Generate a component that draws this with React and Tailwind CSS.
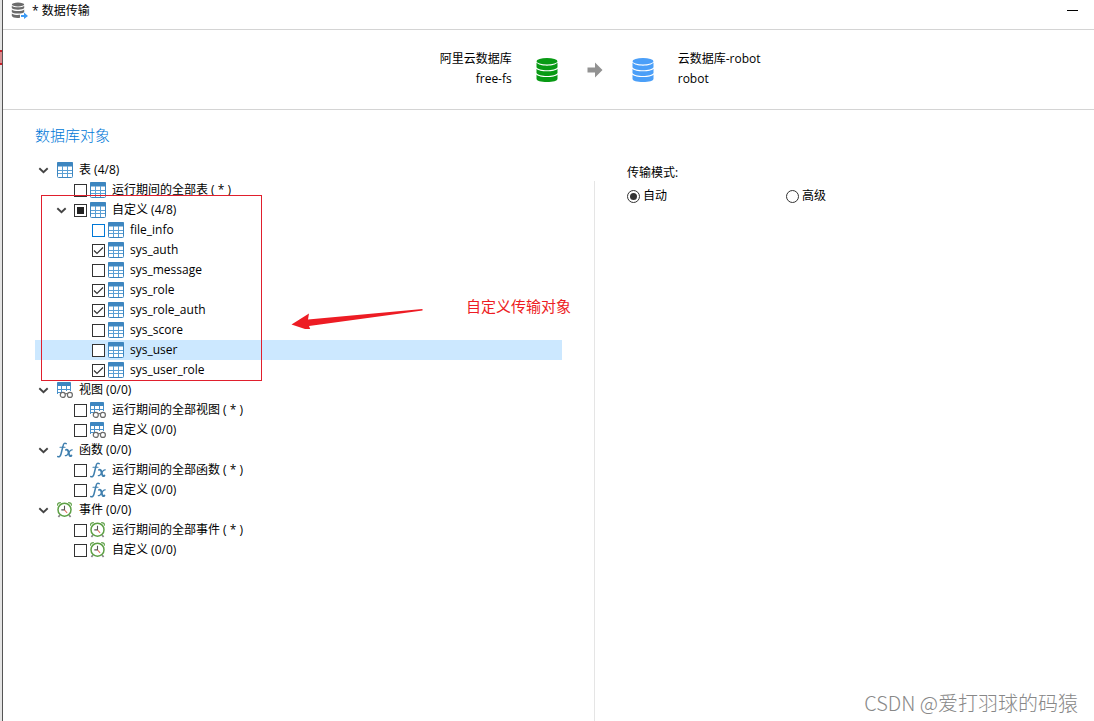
import { useEffect, useRef, useState } from "react";

function DatabaseIcon({ className }) {
  return (
    <svg viewBox="0 0 22 24" className={className} fill="currentColor" aria-hidden="true">
      <ellipse cx="11" cy="3.2" rx="10.5" ry="3.2" />
      <path d="M.5 4.6C2 6.7 6 7.7 11 7.7s9-1 10.500-3.100V9.200C20.500 11.300 16 12.200 11 12.200S1.500 11.300.5 9.200z" />
      <path d="M.5 10.700c1.500 1.800 5.500 2.600 10.500 2.600s9-.8 10.500-2.600v4.200c-1 2.100-5.500 3-10.500 3s-9.500-.9-10.500-3z" />
      <path d="M.5 16.500c1.500 1.800 5.500 2.600 10.500 2.600s9-.8 10.500-2.600v4.200c0 2.100-4.500 3.300-10.500 3.300S.5 22.800.5 20.700z" />
    </svg>
  );
}

function TransferIcon() {
  return (
    <svg viewBox="0 0 17 17" className="size-[17px] shrink-0" aria-hidden="true">
      <g fill="#6b6b6b">
        <ellipse cx="7" cy="2.500" rx="6.200" ry="1.900" />
        <path d="M.8 3.800c2 2 10.400 2 12.400 0v2.300c-1 2.100-11.400 2.100-12.400 0z" />
        <path d="M.8 7.600c2 2 10.400 2 12.400 0v2.300c-1 2.100-11.400 2.100-12.400 0z" />
        <path d="M.8 11.400c2 1.600 6 1.700 8.200 1.400v3c-3.500.5-7.700 0-8.200-2z" />
      </g>
      <path d="M10 12.900h3v-2.300l4 3.400-4 3v-2.100h-3z" fill="#3d9bf5" />
    </svg>
  );
}

function TableIcon() {
  return (
    <svg viewBox="0 0 16 16" className="size-4 shrink-0" aria-hidden="true">
      <rect x=".5" y=".5" width="15" height="15" rx="1" fill="#fff" stroke="#3d86c0" />
      <rect x="0" y="0" width="16" height="4.500" rx="1" fill="#3d86c0" />
      <path d="M5.500 4v11M10.500 4v11M1 8.500h14M1 11.500h14" stroke="#5a9fd4" fill="none" />
    </svg>
  );
}

function ViewIcon() {
  return (
    <svg viewBox="0 0 16 16" className="size-4 shrink-0" aria-hidden="true">
      <path d="M.5 12V1h13v8M4.500 4v7M9.500 4v5M1 7.500h12M1 10.500h3" stroke="#4a92cb" fill="none" />
      <rect x="0" y="0" width="14" height="4" rx="1" fill="#3d86c0" />
      <g fill="#fff" stroke="#6a6a6a" strokeWidth="1.200">
        <circle cx="5.800" cy="12.900" r="2.500" />
        <circle cx="12.900" cy="12.900" r="2.500" />
        <path d="M8.200 11.900q1.200-.8 2.400 0" fill="none" />
      </g>
    </svg>
  );
}

function FunctionIcon() {
  return (
    <svg viewBox="0 0 16 16" className="size-4 shrink-0" fill="none" stroke="#3f7fae" strokeLinecap="round" aria-hidden="true">
      <path d="M9.200 1.600C7.500.5 6.500 1.700 6 4L4 12c-.6 2.300-1.700 3.300-3.300 2.500" strokeWidth="1.500" />
      <path d="M3 5.300h5" strokeWidth="1.100" />
      <path d="M9 7.800c1.500-.6 2.100.4 2.600 2.700s1 4.300 2.800 3.100" strokeWidth="1.900" />
      <path d="M15.200 7.900c-1.600-.5-2.400.9-3.600 3s-2 3.300-3.300 2.700" strokeWidth="1.200" />
    </svg>
  );
}

function EventIcon() {
  return (
    <svg viewBox="0 0 16 16" className="size-4 shrink-0" fill="none" aria-hidden="true">
      <path d="M.6 3.600C.4 1.500 1.500.6 3.800.6M11.200.6c2.300 0 3.400.9 3.200 3" stroke="#5da045" strokeWidth="1.200" />
      <path d="M3 13l-1.600 2M12 13l1.600 2" stroke="#888" strokeWidth="1.800" />
      <circle cx="7.500" cy="7.700" r="6.500" fill="#fff" stroke="#5da045" strokeWidth="1.500" />
      <path d="M7.500 3.800v4.100H4.300" stroke="#555" strokeWidth="1.100" />
      <path d="M7.500 8l2.600 2.800" stroke="#e06a5a" strokeWidth="1.100" />
    </svg>
  );
}

const icons = { table: TableIcon, view: ViewIcon, fn: FunctionIcon, event: EventIcon };

const initialRows = [
  { id: "tables", level: 0, icon: "table", label: "表 (4/8)", toggle: true },
  { id: "tables-all", level: 1, icon: "table", label: "运行期间的全部表 ( * )", state: "off" },
  { id: "tables-custom", level: 1, icon: "table", label: "自定义 (4/8)", toggle: true, state: "mixed" },
  { id: "file_info", level: 2, icon: "table", label: "file_info", state: "off", hot: true },
  { id: "sys_auth", level: 2, icon: "table", label: "sys_auth", state: "on" },
  { id: "sys_message", level: 2, icon: "table", label: "sys_message", state: "off" },
  { id: "sys_role", level: 2, icon: "table", label: "sys_role", state: "on" },
  { id: "sys_role_auth", level: 2, icon: "table", label: "sys_role_auth", state: "on" },
  { id: "sys_score", level: 2, icon: "table", label: "sys_score", state: "off" },
  { id: "sys_user", level: 2, icon: "table", label: "sys_user", state: "off", selected: true },
  { id: "sys_user_role", level: 2, icon: "table", label: "sys_user_role", state: "on" },
  { id: "views", level: 0, icon: "view", label: "视图 (0/0)", toggle: true },
  { id: "views-all", level: 1, icon: "view", label: "运行期间的全部视图 ( * )", state: "off" },
  { id: "views-custom", level: 1, icon: "view", label: "自定义 (0/0)", state: "off" },
  { id: "functions", level: 0, icon: "fn", label: "函数 (0/0)", toggle: true },
  { id: "functions-all", level: 1, icon: "fn", label: "运行期间的全部函数 ( * )", state: "off" },
  { id: "functions-custom", level: 1, icon: "fn", label: "自定义 (0/0)", state: "off" },
  { id: "events", level: 0, icon: "event", label: "事件 (0/0)", toggle: true },
  { id: "events-all", level: 1, icon: "event", label: "运行期间的全部事件 ( * )", state: "off" },
  { id: "events-custom", level: 1, icon: "event", label: "自定义 (0/0)", state: "off" },
];

const indents = ["", "w-[18px]", "w-9"];

function Checkbox({ id, state, hot, onChange }) {
  const ref = useRef(null);
  useEffect(() => {
    ref.current.indeterminate = state === "mixed";
  }, [state]);
  return (
    <span className="relative mr-[3px] size-[13px] shrink-0">
      <input
        ref={ref}
        id={id}
        type="checkbox"
        checked={state === "on"}
        onChange={onChange}
        className={`block size-[13px] appearance-none border bg-white ${hot ? "border-[#0078d7]" : "border-[#333]"}`}
      />
      {state === "on" && (
        <svg viewBox="0 0 13 13" className="pointer-events-none absolute inset-0 size-[13px]" fill="none" aria-hidden="true">
          <path d="M2 6.500l3 3L11 3.500" stroke="#333" strokeWidth="1.200" />
        </svg>
      )}
      {state === "mixed" && <span className="pointer-events-none absolute inset-[3px] bg-[#222]" />}
    </span>
  );
}

function TreeRow({ row, onToggle }) {
  const Icon = icons[row.icon];
  return (
    <li className={`flex h-5 items-center pl-[3px] ${row.selected ? "bg-[#cce8ff]" : ""}`}>
      <span className={`shrink-0 ${indents[row.level]}`} />
      {row.toggle ? (
        <button type="button" aria-label={`展开 ${row.label}`} className="flex w-[18px] shrink-0">
          <svg viewBox="0 0 10 10" className="size-[11px]" fill="none" aria-hidden="true">
            <path d="M1.200 3l3.800 3.600L8.800 3" stroke="#444" strokeWidth="1.700" />
          </svg>
        </button>
      ) : (
        <span className="w-[18px] shrink-0" />
      )}
      {row.state && <Checkbox id={row.id} state={row.state} hot={row.hot} onChange={() => onToggle(row.id)} />}
      {row.level === 0 && <span className="w-px shrink-0" />}
      <Icon />
      <label htmlFor={row.state ? row.id : undefined} className="ml-1.5 whitespace-nowrap">
        {row.label}
      </label>
    </li>
  );
}

function Radio({ label, value, mode, setMode }) {
  return (
    <label className="flex w-[159px] items-center gap-[3px]">
      <input
        type="radio"
        name="mode"
        checked={mode === value}
        onChange={() => setMode(value)}
        className="size-[13px] appearance-none rounded-full border border-[#333] bg-white bg-clip-content p-[2px] checked:bg-[#333]"
      />
      {label}
    </label>
  );
}

export default function App() {
  const [rows, setRows] = useState(initialRows);
  const [mode, setMode] = useState("auto");
  const toggle = (id) =>
    setRows((all) => all.map((r) => (r.id === id ? { ...r, state: r.state === "on" ? "off" : "on" } : r)));

  return (
    <div className="relative flex min-h-screen bg-white font-['Open_Sans','Noto_Sans_CJK_SC',sans-serif] text-xs text-black">
      <div className="flex w-[3px] shrink-0 flex-col border-r border-[#555] bg-[#e4e4e4] pt-[50px]">
        <div className="h-[15px] border-y-2 border-[#c8202a] bg-[#d98a8e]" />
      </div>
      <div className="flex min-w-0 flex-1 flex-col">
        <header className="flex h-[30px] items-start justify-between border-b border-[#d4d4d4] pr-4 pl-2">
          <h1 className="flex items-center gap-1 pt-0.5">
            <TransferIcon />
            <span>* 数据传输</span>
          </h1>
          <button type="button" aria-label="最小化" className="flex h-[21px] items-center">
            <span className="h-px w-[11px] bg-black" />
          </button>
        </header>

        <section className="grid h-20 grid-cols-[55fr_auto_45fr] items-center border-b border-[#d4d4d4] leading-5">
          <div className="pb-0.5 text-right">
            <p>阿里云数据库</p>
            <p>free-fs</p>
          </div>
          <div className="flex items-center gap-[29px] px-6">
            <DatabaseIcon className="h-6 w-[22px] text-[#089a14]" />
            <svg viewBox="0 0 16 16" className="size-4" fill="#929292" aria-hidden="true">
              <path d="M.5 5.500H8V.5l7.500 7.500L8 15.500v-5H.5z" />
            </svg>
            <DatabaseIcon className="h-6 w-[22px] text-[#4b9ff8]" />
          </div>
          <div className="pb-0.5">
            <p>云数据库-robot</p>
            <p>robot</p>
          </div>
        </section>

        <main className="grid flex-1 grid-cols-[591fr_500fr]">
          <section className="pt-[14px] pr-8 pl-8">
            <h2 className="text-[15px] leading-[22px] font-light text-[#0078d7]">数据库对象</h2>
            <div className="relative mt-[14px]">
              <ul>
                {rows.map((row) => (
                  <TreeRow key={row.id} row={row} onToggle={toggle} />
                ))}
              </ul>
              <div className="pointer-events-none absolute top-[35px] left-[6px] h-[186px] w-[221px] border border-[#e01f2d]" />
              <svg viewBox="0 0 134 22" className="pointer-events-none absolute top-[147px] left-64 h-[22px] w-[134px]" fill="#ed1c24" aria-hidden="true">
                <path d="M.5 17.500L18 6.500l-1 6L131.500 2v1.500L18 19l2 5z" />
              </svg>
              <p className="absolute top-[134px] left-[431px] text-[15px] leading-6 whitespace-nowrap text-[#ed1c24]">
                自定义传输对象
              </p>
            </div>
          </section>

          <section className="mt-[71px] border-l border-[#e5e5e5] pl-8">
            <fieldset className="-mt-[18px]">
              <legend className="leading-5">传输模式:</legend>
              <div className="mt-[3px] flex leading-5">
                <Radio label="自动" value="auto" mode={mode} setMode={setMode} />
                <Radio label="高级" value="advanced" mode={mode} setMode={setMode} />
              </div>
            </fieldset>
          </section>
        </main>
      </div>
      <p className="absolute right-4 bottom-1 font-['Noto_Sans_CJK_SC',sans-serif] text-xl font-light text-[#888]">
        CSDN @爱打羽球的码猿
      </p>
    </div>
  );
}
